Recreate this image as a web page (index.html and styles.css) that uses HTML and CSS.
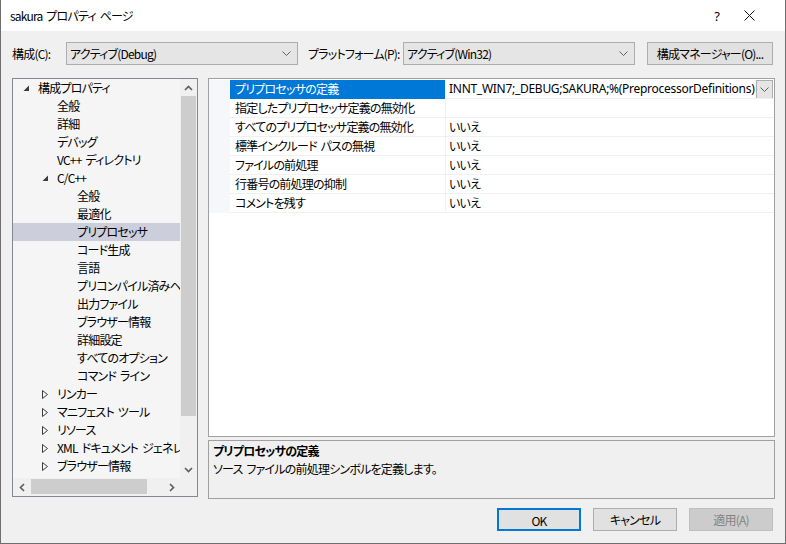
FILE: index.html
```html
<!DOCTYPE html>
<html lang="ja">
<head>
<meta charset="utf-8">
<title>sakura プロパティ ページ</title>
<link rel="stylesheet" href="styles.css">
</head>
<body>
<div class="window">
  <div class="titlebar">
    <span class="title">sakura プロパティ ページ</span>
    <div class="caption">
      <span class="cap cap-help">?</span>
      <span class="cap cap-close"><svg width="11" height="11" viewBox="0 0 11 11"><path d="M0.5 0.5 L10.5 10.5 M10.5 0.5 L0.5 10.5" stroke="#111" stroke-width="1" fill="none"/></svg></span>
    </div>
  </div>

  <div class="toolbar">
    <span class="lbl lbl-config">構成(C):</span>
    <div class="combo"><span>アクティブ(Debug)</span><svg class="chev" width="9" height="5" viewBox="0 0 9 5"><path d="M0.5 0.5 L4.5 4.5 L8.5 0.5" fill="none" stroke="#606060"/></svg></div>
    <span class="lbl lbl-platform">プラットフォーム(P):</span>
    <div class="combo"><span>アクティブ(Win32)</span><svg class="chev" width="9" height="5" viewBox="0 0 9 5"><path d="M0.5 0.5 L4.5 4.5 L8.5 0.5" fill="none" stroke="#606060"/></svg></div>
    <button class="btn btn-manager">構成マネージャー(O)...</button>
  </div>

  <div class="main">
    <div class="tree">
      <div class="tree-view">
        <div class="node lvl0"><span class="tog"><svg width="7" height="7" viewBox="0 0 7 7"><path d="M6 0.5 L6 6 L0.5 6 Z" fill="#3c3c3c"/></svg></span>構成プロパティ</div>
        <div class="node lvl1"><span class="tog"></span>全般</div>
        <div class="node lvl1"><span class="tog"></span>詳細</div>
        <div class="node lvl1"><span class="tog"></span>デバッグ</div>
        <div class="node lvl1"><span class="tog"></span>VC++ ディレクトリ</div>
        <div class="node lvl1"><span class="tog"><svg width="7" height="7" viewBox="0 0 7 7"><path d="M6 0.5 L6 6 L0.5 6 Z" fill="#3c3c3c"/></svg></span>C/C++</div>
        <div class="node lvl2"><span class="tog"></span>全般</div>
        <div class="node lvl2"><span class="tog"></span>最適化</div>
        <div class="node lvl2 selected"><span class="tog"></span>プリプロセッサ</div>
        <div class="node lvl2"><span class="tog"></span>コード生成</div>
        <div class="node lvl2"><span class="tog"></span>言語</div>
        <div class="node lvl2"><span class="tog"></span>プリコンパイル済みヘッダー</div>
        <div class="node lvl2"><span class="tog"></span>出力ファイル</div>
        <div class="node lvl2"><span class="tog"></span>ブラウザー情報</div>
        <div class="node lvl2"><span class="tog"></span>詳細設定</div>
        <div class="node lvl2"><span class="tog"></span>すべてのオプション</div>
        <div class="node lvl2"><span class="tog"></span>コマンド ライン</div>
        <div class="node lvl1"><span class="tog"><svg width="6" height="9" viewBox="0 0 6 9"><path d="M0.5 0.5 L5.5 4.5 L0.5 8.5 Z" fill="none" stroke="#3c3c3c"/></svg></span>リンカー</div>
        <div class="node lvl1"><span class="tog"><svg width="6" height="9" viewBox="0 0 6 9"><path d="M0.5 0.5 L5.5 4.5 L0.5 8.5 Z" fill="none" stroke="#3c3c3c"/></svg></span>マニフェスト ツール</div>
        <div class="node lvl1"><span class="tog"><svg width="6" height="9" viewBox="0 0 6 9"><path d="M0.5 0.5 L5.5 4.5 L0.5 8.5 Z" fill="none" stroke="#3c3c3c"/></svg></span>リソース</div>
        <div class="node lvl1"><span class="tog"><svg width="6" height="9" viewBox="0 0 6 9"><path d="M0.5 0.5 L5.5 4.5 L0.5 8.5 Z" fill="none" stroke="#3c3c3c"/></svg></span>XML ドキュメント ジェネレーター</div>
        <div class="node lvl1"><span class="tog"><svg width="6" height="9" viewBox="0 0 6 9"><path d="M0.5 0.5 L5.5 4.5 L0.5 8.5 Z" fill="none" stroke="#3c3c3c"/></svg></span>ブラウザー情報</div>
        <div class="node lvl1"><span class="tog"><svg width="6" height="9" viewBox="0 0 6 9"><path d="M0.5 0.5 L5.5 4.5 L0.5 8.5 Z" fill="none" stroke="#3c3c3c"/></svg></span>ビルド イベント</div>
      </div>
      <div class="vscroll">
        <span class="arrow"><svg width="9" height="6" viewBox="0 0 9 6"><path d="M1 5 L4.5 1.5 L8 5" fill="none" stroke="#606060" stroke-width="1.7"/></svg></span>
        <span class="vthumb"></span>
        <span class="vtrack"></span>
        <span class="arrow"><svg width="9" height="6" viewBox="0 0 9 6"><path d="M1 1 L4.5 4.5 L8 1" fill="none" stroke="#606060" stroke-width="1.7"/></svg></span>
      </div>
      <div class="hscroll">
        <span class="arrow"><svg width="6" height="9" viewBox="0 0 6 9"><path d="M5 1 L1.5 4.5 L5 8" fill="none" stroke="#606060" stroke-width="1.7"/></svg></span>
        <span class="hthumb"></span>
        <span class="htrack"></span>
        <span class="arrow"><svg width="6" height="9" viewBox="0 0 6 9"><path d="M1 1 L4.5 4.5 L1 8" fill="none" stroke="#606060" stroke-width="1.7"/></svg></span>
      </div>
      <div class="corner"></div>
    </div>

    <div class="right">
      <div class="grid">
        <div class="row selected"><span class="m"></span><span class="name">プリプロセッサの定義</span><span class="sep"></span><span class="val val-edit"><span class="val-text">INNT_WIN7;_DEBUG;SAKURA;%(PreprocessorDefinitions)</span><span class="dd"><svg width="9" height="5" viewBox="0 0 9 5"><path d="M0.5 0.5 L4.5 4.5 L8.5 0.5" fill="none" stroke="#606060"/></svg></span></span></div>
        <div class="row"><span class="m"></span><span class="name">指定したプリプロセッサ定義の無効化</span><span class="sep"></span><span class="val"></span></div>
        <div class="row"><span class="m"></span><span class="name">すべてのプリプロセッサ定義の無効化</span><span class="sep"></span><span class="val">いいえ</span></div>
        <div class="row"><span class="m"></span><span class="name">標準インクルード パスの無視</span><span class="sep"></span><span class="val">いいえ</span></div>
        <div class="row"><span class="m"></span><span class="name">ファイルの前処理</span><span class="sep"></span><span class="val">いいえ</span></div>
        <div class="row"><span class="m"></span><span class="name">行番号の前処理の抑制</span><span class="sep"></span><span class="val">いいえ</span></div>
        <div class="row"><span class="m"></span><span class="name">コメントを残す</span><span class="sep"></span><span class="val">いいえ</span></div>
      </div>
      <div class="desc">
        <div class="desc-title">プリプロセッサの定義</div>
        <div class="desc-text">ソース ファイルの前処理シンボルを定義します。</div>
      </div>
    </div>
  </div>

  <div class="footer">
    <button class="btn fbtn btn-default">OK</button>
    <button class="btn fbtn">キャンセル</button>
    <button class="btn fbtn btn-disabled">適用(A)</button>
  </div>
</div>
</body>
</html>
```

FILE: styles.css
```css
* { box-sizing: border-box; }
html, body { margin: 0; padding: 0; }
body {
  width: 786px;
  height: 544px;
  overflow: hidden;
  background: #f0f0f0;
  color: #000;
  font-family: "Noto Sans CJK JP", "Noto Sans", sans-serif;
  font-size: 12px;
  font-feature-settings: "palt" 1;
  letter-spacing: -0.8px;
  word-spacing: 2px;
}
.window {
  width: 786px;
  height: 544px;
  border: 1px solid #6e6e6e;
  border-top: none;
  background: #f0f0f0;
  display: flex;
  flex-direction: column;
}
.titlebar {
  height: 31px;
  flex: none;
  background: #fff;
  display: flex;
  align-items: center;
}
.title { flex: 1; padding-left: 9px; line-height: 16px; }
.caption { display: flex; margin-right: 20px; }
.cap {
  width: 32px;
  height: 31px;
  display: flex;
  align-items: center;
  justify-content: center;
}
.cap-help { font-size: 13px; font-family: "Noto Sans", sans-serif; letter-spacing: 0; }

.toolbar {
  height: 47px;
  flex: none;
  display: flex;
  align-items: flex-start;
  padding: 11px 0 0 11px;
}
.lbl { line-height: 23px; white-space: nowrap; }
.lbl-config { width: 54px; }
.lbl-platform { width: 95px; margin-left: 10px; }
.combo {
  width: 232px;
  height: 23px;
  background: #e5e5e5;
  border: 1px solid #adadad;
  display: flex;
  align-items: center;
  justify-content: space-between;
  padding: 0 6px 0 3px;
  line-height: 21px;
}
.btn {
  font: inherit;
  letter-spacing: inherit;
  word-spacing: inherit;
  color: #000;
  background: #e1e1e1;
  border: 1px solid #adadad;
  padding: 0;
  height: 23px;
  line-height: 21px;
}
.btn-manager { width: 126px; margin-left: 12px; }

.main {
  height: 421px;
  flex: none;
  display: flex;
  gap: 10px;
  padding-left: 11px;
}
.tree {
  width: 186px;
  height: 419px;
  border: 1px solid #828790;
  display: grid;
  grid-template-columns: 167px 17px;
  grid-template-rows: 399px 18px;
  background: #f5f5f5;
}
.tree-view { overflow: hidden; }
.node {
  height: 18px;
  line-height: 18px;
  display: flex;
  align-items: center;
  white-space: nowrap;
}
.node.selected { background: #cccedb; }
.lvl0 { padding-left: 10px; }
.lvl1 { padding-left: 29px; }
.lvl2 { padding-left: 49px; }
.tog {
  width: 15px;
  flex: none;
  display: flex;
  align-items: center;
  height: 18px;
}
.vscroll {
  background: #f0f0f0;
  display: flex;
  flex-direction: column;
}
.arrow {
  width: 17px;
  height: 17px;
  flex: none;
  display: flex;
  align-items: center;
  justify-content: center;
}
.vthumb { height: 320px; margin: 0 1px; background: #cdcdcd; flex: none; }
.vtrack { flex: 1; }
.hscroll {
  background: #f0f0f0;
  display: flex;
  align-items: stretch;
}
.hscroll .arrow { height: 18px; }
.hthumb { width: 116px; margin: 1px 0 2px 1px; background: #cdcdcd; flex: none; }
.htrack { flex: 1; }
.corner { background: #f0f0f0; }

.right {
  width: 567px;
  display: flex;
  flex-direction: column;
  gap: 3px;
}
.grid {
  height: 359px;
  border: 1px solid #a0a0a0;
  background: #fff;
  padding-top: 1px;
}
.row { display: flex; height: 19px; }
.m { width: 21px; flex: none; background: #f5f7fb; }
.name {
  width: 215px;
  flex: none;
  padding-left: 5px;
  line-height: 18px;
  border-bottom: 1px solid #f0f0f0;
  white-space: nowrap;
  overflow: hidden;
}
.sep { width: 1px; flex: none; background: #f0f0f0; }
.val {
  flex: 1;
  padding-left: 3px;
  line-height: 18px;
  border-bottom: 1px solid #f0f0f0;
  white-space: nowrap;
  overflow: hidden;
}
.row.selected .name { background: #0078d7; color: #fff; border-bottom-color: #0078d7; }
.val-edit { display: flex; padding-right: 1px; }
.val-text { flex: 1; overflow: hidden; font-family: "Noto Sans", sans-serif; letter-spacing: -0.28px; word-spacing: 0; }
.dd {
  width: 17px;
  height: 19px;
  margin-bottom: -1px;
  flex: none;
  background: #e5e5e5;
  border: 1px solid #adadad;
  display: flex;
  align-items: center;
  justify-content: center;
}
.desc {
  height: 59px;
  border: 1px solid #a0a0a0;
  background: #f0f0f0;
  padding: 1px 4px;
}
.desc-title { font-weight: bold; line-height: 18px; }
.desc-text { line-height: 18px; }

.footer {
  display: flex;
  justify-content: flex-end;
  gap: 12px;
  padding: 9px 12px 0 0;
}
.fbtn { width: 84px; }
.btn-default { border: 2px solid #0078d7; }
.btn-disabled { background: #cccccc; border-color: #bfbfbf; color: #838383; }
```
